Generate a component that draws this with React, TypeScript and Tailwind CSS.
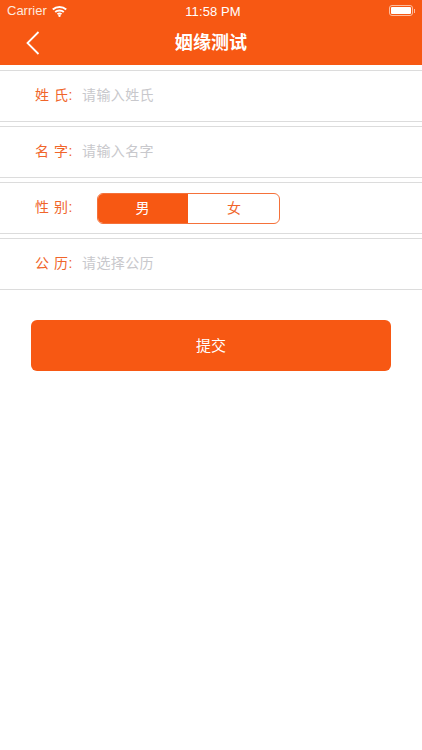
const cjk = "font-['Liberation_Sans','Noto_Sans_CJK_SC',sans-serif]";

function Wifi() {
  return (
    <svg width="15" height="11" viewBox="0 0 15 11" fill="none" stroke="#fff" className="ml-[5px] mt-[1px]">
      <path d="M.8 3.6C4.5 .2 10.5 .2 14.2 3.6" strokeWidth="2" />
      <path d="M3.2 6C5.6 3.9 9.4 3.9 11.8 6" strokeWidth="1.9" />
      <path d="M5.5 8.2C6.6 7.3 8.4 7.3 9.5 8.2" strokeWidth="1.8" />
      <circle cx="7.5" cy="9.7" r="1.2" fill="#fff" stroke="none" />
    </svg>
  );
}

function Row({ label, placeholder }: { label: string; placeholder: string }) {
  return (
    <div className="h-[52px] border-y border-[#dcdcdc] flex items-center pl-[35px]">
      <span className="w-[47px] text-[14px] text-[#f0652a] tracking-[0.5px] whitespace-pre -mt-[1px]">{label}</span>
      <span className="text-[14px] text-[#c8c8cc] tracking-[0.4px] -mt-[1px]">{placeholder}</span>
    </div>
  );
}

export default function App() {
  return (
    <div className={`w-[422px] h-[750px] bg-white overflow-hidden ${cjk}`}>
      <header className="h-[65px] bg-[#f75813] text-white">
        <div className="h-[21px] relative flex items-center pl-[7px] text-[13px]">
          <span className="text-[#fee9de]">Carrier</span>
          <Wifi />
          <span className="absolute left-[4px] right-0 top-[2px] text-center tracking-[0.1px] font-medium">11:58 PM</span>
          <div className="absolute right-[7px] top-[5px] flex items-center">
            <div className="w-[24px] h-[11px] rounded-[3px] border border-[#fdbd9f] p-[1px]">
              <div className="h-full bg-white rounded-[1px]" />
            </div>
            <div className="w-[1px] h-[4px] bg-[#fdbd9f] ml-[1px]" />
          </div>
        </div>
        <div className="h-[44px] relative flex items-center justify-center">
          <svg width="14" height="24" viewBox="0 0 14 24" fill="none" stroke="#fff" strokeWidth="1.8" className="absolute left-[26px] top-[10px]">
            <path d="M12.5 1L1.5 12l11 11" />
          </svg>
          <h1 className="text-[18px] font-bold leading-none tracking-[0.1px]">姻缘测试</h1>
        </div>
      </header>

      <div className="pt-[5px] flex flex-col gap-[4px]">
        <Row label="姓 氏:" placeholder="请输入姓氏" />
        <Row label="名 字:" placeholder="请输入名字" />
        <div className="h-[52px] border-y border-[#dcdcdc] flex items-center pl-[35px]">
          <span className="w-[62px] text-[14px] text-[#f0652a] tracking-[0.5px] whitespace-pre -mt-[1px]">性 别:</span>
          <div className="w-[183px] h-[31px] flex rounded-[6px] border border-[#f5713a] overflow-hidden text-[14px]">
            <div className="w-[91px] -my-[1px] -ml-[1px] bg-[#f75813] text-white flex items-center justify-center">男</div>
            <div className="flex-1 text-[#f0652a] flex items-center justify-center pl-[1px]">女</div>
          </div>
        </div>
        <Row label="公 历:" placeholder="请选择公历" />
      </div>

      <button className="block ml-[31px] mt-[30px] w-[360px] h-[51px] rounded-[6px] bg-[#f75813] text-white text-[15px] pt-[1px]">
        提交
      </button>
    </div>
  );
}
